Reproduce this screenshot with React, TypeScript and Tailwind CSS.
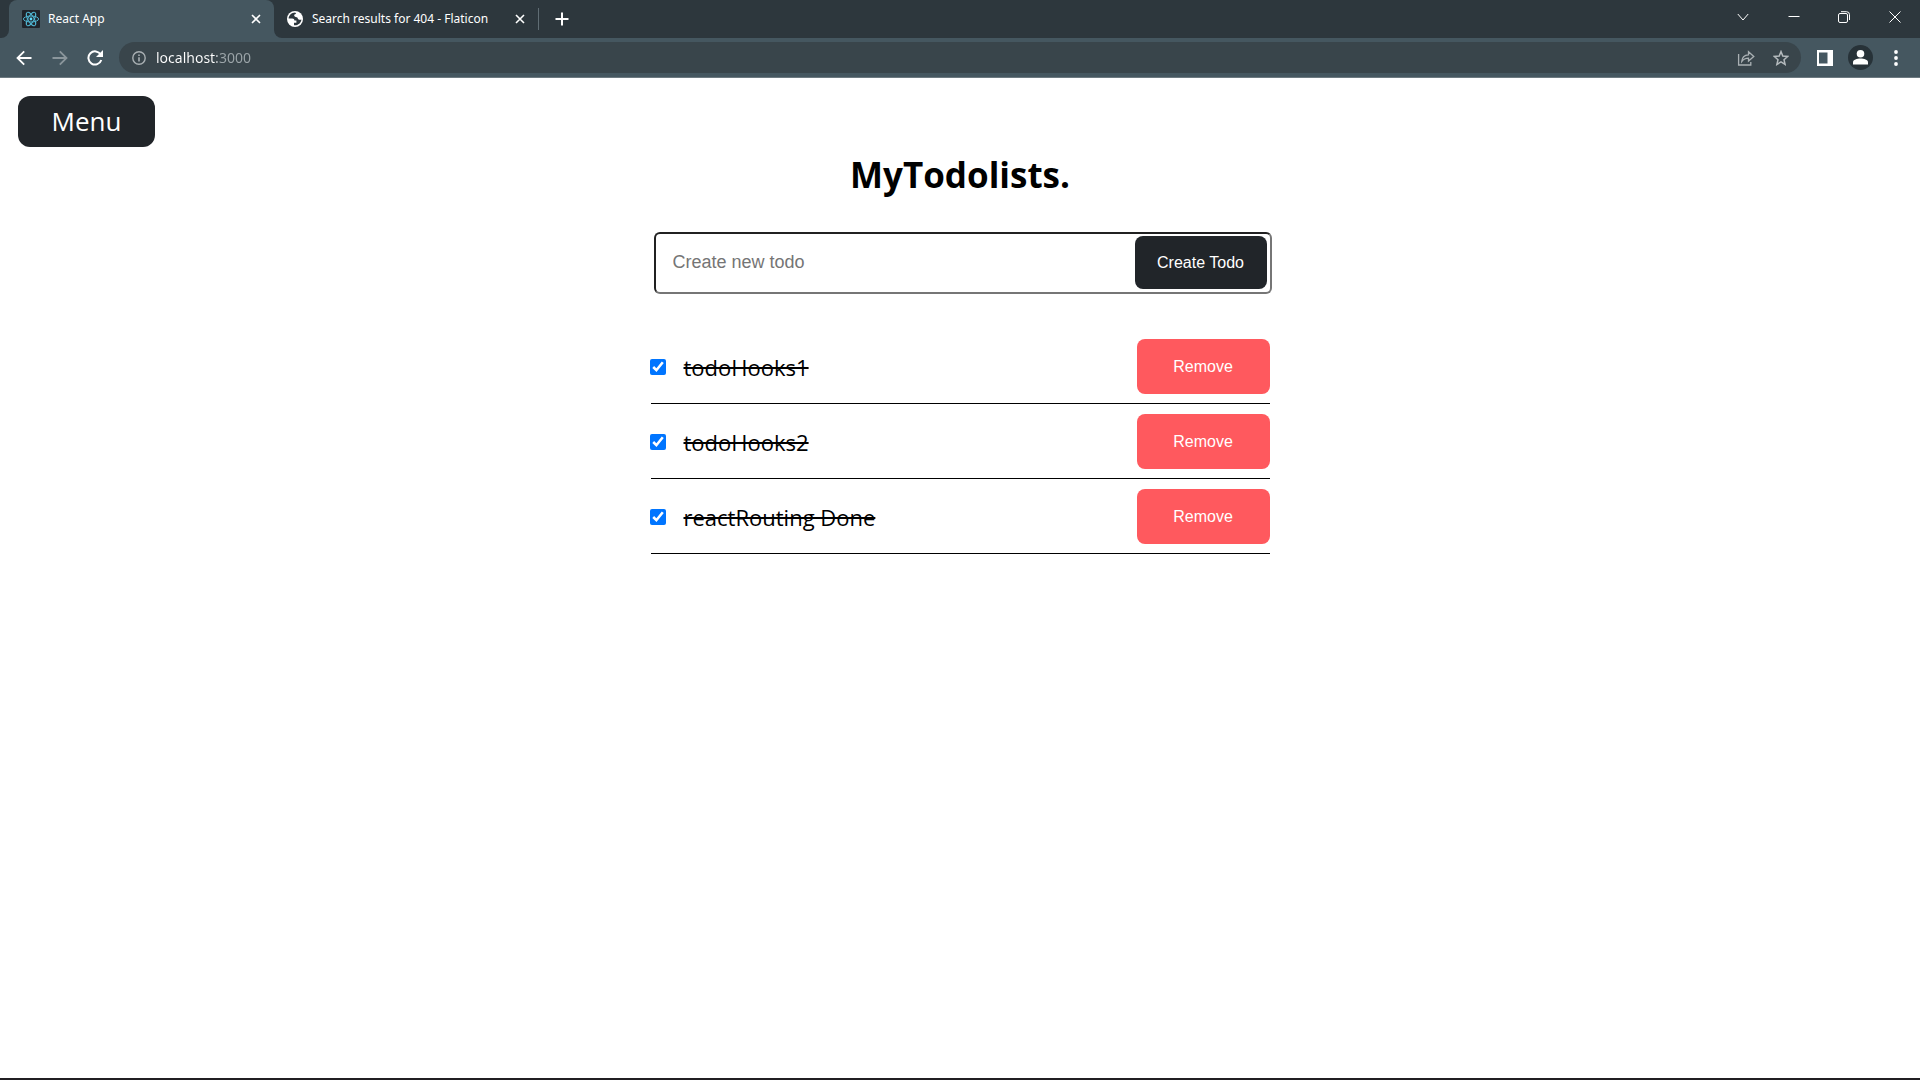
import { useState } from "react";

const initialTodos = ["todoHooks1", "todoHooks2", "reactRouting Done"];

function ReactLogo() {
  return (
    <svg viewBox="0 0 18 18" className="size-[18px] shrink-0" aria-hidden="true">
      <rect width="18" height="18" rx="1" fill="#20232a" />
      <g fill="none" stroke="#4fb3cf" strokeWidth="1">
        <ellipse cx="9" cy="9" rx="7.6" ry="3" />
        <ellipse cx="9" cy="9" rx="7.6" ry="3" transform="rotate(60 9 9)" />
        <ellipse cx="9" cy="9" rx="7.6" ry="3" transform="rotate(120 9 9)" />
      </g>
      <circle cx="9" cy="9" r="1.4" fill="#61dafb" />
    </svg>
  );
}

function GlobeIcon() {
  return (
    <svg viewBox="0 0 16 16" className="size-4 shrink-0" aria-hidden="true">
      <circle cx="8" cy="8" r="8" fill="#fff" />
      <path
        d="M8.2 1.6C4.6 1.6 1.8 4.400 1.600 7.500h3.600c1.500 0 2.200.8 2.200 2.100h2v2.200H7v2.500c3.700.5 7.200-2.300 7.400-5.800-1.200.6-2.600.4-3.300-.5-.5-.7-.3-1.500-1.400-1.700-1.500-.2-2.700-.8-2.500-2.200.2-1 1.300-1 2-1.100z"
        fill="#2d373d"
      />
    </svg>
  );
}

function CloseIcon() {
  return (
    <svg viewBox="0 0 10 10" className="size-[10px]" stroke="#fff" strokeWidth="1.600" aria-hidden="true">
      <path d="M1 1l8 8M9 1l-8 8" />
    </svg>
  );
}

function TabStrip() {
  return (
    <div className="flex h-[38px] bg-[#2d373d]">
      <div className="flex w-[9px] shrink-0 bg-[#455760]">
        <span className="flex-1 rounded-br-lg bg-[#2d373d]" />
      </div>
      <div className="flex w-[265px] shrink-0 items-center rounded-t-lg bg-[#455760] pl-[13px] pr-[13px]">
        <ReactLogo />
        <span className="ml-2 flex-1 text-[12px] leading-4 text-white">React App</span>
        <button aria-label="Close React App tab"><CloseIcon /></button>
      </div>
      <div className="flex w-[265px] shrink-0 bg-[#455760]">
        <div className="flex flex-1 items-center rounded-bl-lg bg-[#2d373d] pl-[13px]">
          <GlobeIcon />
          <span className="ml-[9px] flex-1 whitespace-nowrap text-[12px] leading-4 text-white">
            Search results for 404 - Flaticon
          </span>
          <button aria-label="Close Flaticon tab" className="mr-[13px]"><CloseIcon /></button>
          <span className="h-[22px] w-px bg-[#606d74]" />
        </div>
      </div>
      <button aria-label="New tab" className="ml-4">
        <svg viewBox="0 0 14 14" className="size-[14px]" stroke="#fff" strokeWidth="2" aria-hidden="true">
          <path d="M7 .5v13M.5 7h13" />
        </svg>
      </button>
      <div className="ml-auto flex h-[34px] items-center">
        <button aria-label="Search tabs" className="flex w-[51px] justify-center">
          <svg viewBox="0 0 12 12" className="size-3" fill="none" stroke="#fff" aria-hidden="true">
            <path d="M.8 3L6 9l5.200-6" />
          </svg>
        </button>
        <button aria-label="Minimize" className="flex w-[51px] justify-center">
          <svg viewBox="0 0 12 12" className="size-3" stroke="#fff" aria-hidden="true">
            <path d="M.5 5.500h11" />
          </svg>
        </button>
        <button aria-label="Restore" className="flex w-[50px] justify-center">
          <svg viewBox="0 0 12 12" className="size-3" fill="none" stroke="#fff" aria-hidden="true">
            <rect x=".5" y="2.500" width="9" height="9" rx="1.500" />
            <path d="M3 .7h5.500a3 3 0 0 1 3 3V9" />
          </svg>
        </button>
        <button aria-label="Close window" className="flex w-[51px] justify-center">
          <svg viewBox="0 0 12 12" className="size-3" stroke="#fff" aria-hidden="true">
            <path d="M.5.5l11 11M11.500.5l-11 11" />
          </svg>
        </button>
      </div>
    </div>
  );
}

function Toolbar() {
  return (
    <div className="flex h-10 items-center border-b border-[#6d7a81] bg-[#455760] pl-4 pr-[22px]">
      <button aria-label="Back">
        <svg viewBox="0 0 16 16" className="size-4" fill="none" stroke="#fff" strokeWidth="1.800" aria-hidden="true">
          <path d="M15.500 8H2M8.200 1.300L1.500 8l6.700 6.700" />
        </svg>
      </button>
      <button aria-label="Forward" className="ml-5">
        <svg viewBox="0 0 16 16" className="size-4" fill="none" stroke="#8b969c" strokeWidth="1.800" aria-hidden="true">
          <path d="M.5 8H14M7.800 1.300L14.500 8l-6.700 6.700" />
        </svg>
      </button>
      <button aria-label="Reload" className="ml-[19px]">
        <svg viewBox="0 0 16 16" className="size-4" aria-hidden="true">
          <path d="M13.700 4.600A6.600 6.600 0 1 0 14.300 10" fill="none" stroke="#fff" strokeWidth="2" />
          <path d="M16 0v7H9z" fill="#fff" />
        </svg>
      </button>
      <div className="ml-4 flex h-[31px] flex-1 items-center rounded-full bg-[#39454b] pl-[13px] pr-3">
        <button aria-label="View site information">
          <svg viewBox="0 0 14 14" className="size-[14px]" fill="none" stroke="#a9b0b3" strokeWidth="1.400" aria-hidden="true">
            <circle cx="7" cy="7" r="6.200" />
            <path d="M7 6.200v4.300M7 3.500v1.500" strokeWidth="1.600" />
          </svg>
        </button>
        <input
          aria-label="Address bar"
          defaultValue="localhost:3000"
          className="ml-[10px] h-6 min-w-0 flex-1 bg-[linear-gradient(90deg,#ffffff_61px,#9ca5a9_61px)] bg-clip-text text-sm text-transparent caret-white outline-none"
        />
        <button aria-label="Share this page">
          <svg viewBox="0 0 18 16" className="h-4 w-[18px]" fill="none" stroke="#a9b0b3" strokeWidth="1.300" aria-hidden="true">
            <path d="M1.600 4v11h12.200v-3" />
            <path d="M4.700 11.500C5 7.500 7.500 5 11.500 4.800V1.700L16.800 6.500 11.500 11V8.200C8.500 8.200 6.500 9 4.700 11.500z" />
          </svg>
        </button>
        <button aria-label="Bookmark this tab" className="ml-[18px]">
          <svg viewBox="0 0 16 16" className="size-4" fill="none" stroke="#b4babd" strokeWidth="1.500" aria-hidden="true">
            <path d="M8 1.600l1.800 4.500 4.900.4-3.700 3.200 1.100 4.700L8 11.900l-4.100 2.500L5 9.700 1.300 6.500l4.900-.4z" />
          </svg>
        </button>
      </div>
      <button aria-label="Side panel" className="ml-4">
        <svg viewBox="0 0 16 16" className="size-4" aria-hidden="true">
          <path d="M0 0h16v16H0zM2 2.500v11h8.500v-11z" fill="#fff" fillRule="evenodd" />
        </svg>
      </button>
      <button aria-label="Profile" className="ml-[15px]">
        <svg viewBox="0 0 25 25" className="size-[25px]" aria-hidden="true">
          <circle cx="12.500" cy="12.500" r="12.500" fill="#273238" />
          <circle cx="12.500" cy="8.800" r="3.800" fill="#fff" />
          <path d="M5 19.500v-2.300c0-2.400 4-3.700 7.500-3.700s7.500 1.300 7.500 3.700v2.300z" fill="#fff" />
        </svg>
      </button>
      <button aria-label="Browser menu" className="ml-[21px]">
        <svg viewBox="0 0 4 16" className="h-4 w-1" fill="#fff" aria-hidden="true">
          <circle cx="2" cy="2" r="1.900" />
          <circle cx="2" cy="8" r="1.900" />
          <circle cx="2" cy="14" r="1.900" />
        </svg>
      </button>
    </div>
  );
}

export default function App() {
  const [todos, setTodos] = useState(initialTodos.map((title) => ({ title, done: true })));
  const [draft, setDraft] = useState("");

  return (
    <div className="flex min-h-screen flex-col bg-white font-['Open_Sans',sans-serif] text-black">
      <header className="font-['Noto_Sans',sans-serif]">
        <TabStrip />
        <Toolbar />
      </header>
      <main className="flex-1 border-b-2 border-[#211f23] px-[18px] pt-[18px]">
        <button className="block h-[51px] w-[137px] rounded-xl bg-[#212529] pb-0.5 text-[26px] leading-none text-white">
          Menu
        </button>
        <h1 className="mt-1 text-center text-[35px] leading-[48px] font-bold">MyTodolists.</h1>
        <div className="mx-auto w-full max-w-[619px]">
          <form
            className="-mr-0.5 ml-[3px] mt-[33px] flex h-[62px] items-center rounded-md border-2 border-t-[#212121] border-r-[#767676] border-b-[#767676] border-l-[#212121] pb-px pl-[17px] pr-[3px] font-['Liberation_Sans',Arial,sans-serif]"
            onSubmit={(event) => {
              event.preventDefault();
              if (!draft.trim()) return;
              setTodos([...todos, { title: draft, done: false }]);
              setDraft("");
            }}
          >
            <input
              aria-label="New todo"
              placeholder="Create new todo"
              value={draft}
              onChange={(event) => setDraft(event.target.value)}
              className="h-full min-w-0 flex-1 text-lg outline-none placeholder:text-[#757575]"
            />
            <button className="h-[53px] w-[132px] rounded-lg bg-[#212529] text-base text-white">
              Create Todo
            </button>
          </form>
          <ul className="mt-[35px]">
            {todos.map((todo, index) => (
              <li key={index} className="flex items-center border-b border-black pt-[10px] pb-[9px]">
                <label className="-ml-px flex flex-1 items-center">
                  <input
                    type="checkbox"
                    checked={todo.done}
                    onChange={() =>
                      setTodos(todos.map((item, i) => (i === index ? { ...item, done: !item.done } : item)))
                    }
                    className="size-4 accent-[#0075ff]"
                  />
                  <span className={todo.done ? "ml-[18px] text-[22px] leading-8 line-through decoration-2" : "ml-[18px] text-[22px] leading-8"}>
                    {todo.title}
                  </span>
                </label>
                <button
                  onClick={() => setTodos(todos.filter((_, i) => i !== index))}
                  className="h-[55px] w-[133px] rounded-lg bg-[#ff595e] font-['Liberation_Sans',Arial,sans-serif] text-base text-white"
                >
                  Remove
                </button>
              </li>
            ))}
          </ul>
        </div>
      </main>
    </div>
  );
}
